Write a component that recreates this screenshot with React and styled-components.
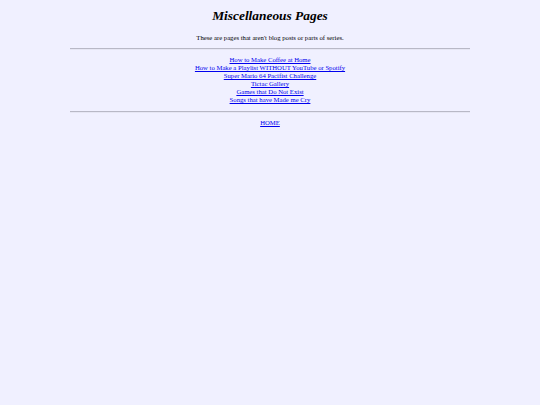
import React from "react";
import styled, { createGlobalStyle } from "styled-components";

const GlobalStyle = createGlobalStyle`
  html, body {
    margin: 0;
    padding: 0;
    background: #f0f0ff;
  }
  body {
    font-family: "Liberation Serif", "Times New Roman", serif;
    color: #000;
  }
`;

const Page = styled.div`
  width: 400px;
  margin: 0 auto;
  padding-top: 8px;
  text-align: center;
`;

const Title = styled.h1`
  margin: 0;
  font-size: 13.4px;
  line-height: 16px;
  font-style: italic;
  font-weight: bold;
`;

const Intro = styled.p`
  margin: 10px 0 0;
  font-size: 6.7px;
  line-height: 8px;
`;

const Rule = styled.hr`
  margin: ${(p) => p.$top}px 0 0;
  border: none;
  border-top: 1px solid #b8b8c6;
  border-bottom: 1px solid #e6e6f4;
  height: 0;
`;

const LinkList = styled.nav`
  margin-top: 6px;
  display: flex;
  flex-direction: column;
  align-items: center;
`;

const Link = styled.a`
  font-size: 6.7px;
  line-height: 8px;
  color: #0000ee;
  text-decoration: underline;
`;

const Home = styled.div`
  margin-top: 6px;
  font-size: 6.7px;
  line-height: 8px;
`;

const pages = [
  "How to Make Coffee at Home",
  "How to Make a Playlist WITHOUT YouTube or Spotify",
  "Super Mario 64 Pacifist Challenge",
  "Tictac Gallery",
  "Games that Do Not Exist",
  "Songs that have Made me Cry",
];

const App = () => {
  return (
    <>
      <GlobalStyle />
      <Page>
        <Title>Miscellaneous Pages</Title>
        <Intro>These are pages that aren't blog posts or parts of series.</Intro>
        <Rule $top={6} />
        <LinkList>
          {pages.map((title) => (
            <Link key={title} href="#">
              {title}
            </Link>
          ))}
        </LinkList>
        <Rule $top={7} />
        <Home>
          <Link href="#">HOME</Link>
        </Home>
      </Page>
    </>
  );
};

export default App;
